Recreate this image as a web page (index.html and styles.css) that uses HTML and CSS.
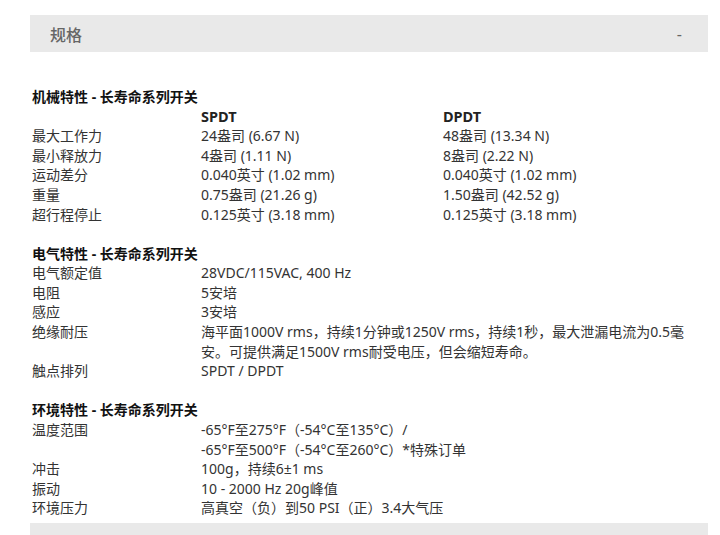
FILE: index.html
```html
<!DOCTYPE html>
<html lang="zh-CN">
<head>
<meta charset="utf-8">
<title>规格</title>
<link rel="stylesheet" href="styles.css">
</head>
<body>
<div class="page">
  <div class="acc-header">
    <span class="acc-title">规格</span>
    <span class="acc-toggle">-</span>
  </div>
  <div class="acc-body">
    <section class="spec">
      <h3 class="spec-title">机械特性 - 长寿命系列开关</h3>
      <div class="spec-grid three">
        <div></div><div class="col-head">SPDT</div><div class="col-head">DPDT</div>
        <div>最大工作力</div><div>24盎司 (6.67 N)</div><div>48盎司 (13.34 N)</div>
        <div>最小释放力</div><div>4盎司 (1.11 N)</div><div>8盎司 (2.22 N)</div>
        <div>运动差分</div><div>0.040英寸 (1.02 mm)</div><div>0.040英寸 (1.02 mm)</div>
        <div>重量</div><div>0.75盎司 (21.26 g)</div><div>1.50盎司 (42.52 g)</div>
        <div>超行程停止</div><div>0.125英寸 (3.18 mm)</div><div>0.125英寸 (3.18 mm)</div>
      </div>
    </section>
    <section class="spec">
      <h3 class="spec-title">电气特性 - 长寿命系列开关</h3>
      <div class="spec-grid two">
        <div>电气额定值</div><div>28VDC/115VAC, 400 Hz</div>
        <div>电阻</div><div>5安培</div>
        <div>感应</div><div>3安培</div>
        <div>绝缘耐压</div><div>海平面1000V rms，持续1分钟或1250V rms，持续1秒，最大泄漏电流为0.5毫<br>安。可提供满足1500V rms耐受电压，但会缩短寿命。</div>
        <div>触点排列</div><div>SPDT / DPDT</div>
      </div>
    </section>
    <section class="spec">
      <h3 class="spec-title">环境特性 - 长寿命系列开关</h3>
      <div class="spec-grid two">
        <div>温度范围</div><div>-65°F至275°F（-54°C至135°C）/<br>-65°F至500°F（-54°C至260°C）*特殊订单</div>
        <div>冲击</div><div>100g，持续6±1 ms</div>
        <div>振动</div><div>10 - 2000 Hz 20g峰值</div>
        <div>环境压力</div><div>高真空（负）到50 PSI（正）3.4大气压</div>
      </div>
    </section>
  </div>
  <div class="acc-header next"></div>
</div>
</body>
</html>
```

FILE: styles.css
```css
html, body {
  margin: 0;
  padding: 0;
  background: #fff;
}
body {
  font-family: "Noto Sans", "Noto Sans CJK SC", sans-serif;
  color: #333;
  font-size: 14px;
  overflow: hidden;
}
.page {
  padding: 15px 12px 0 30px;
}
.acc-header {
  background: #e9e9e9;
  height: 37px;
  padding: 0 26px 0 20px;
  display: flex;
  align-items: center;
  justify-content: space-between;
}
.acc-title {
  font-size: 16px;
  color: #666;
  font-weight: 500;
  font-family: "Noto Sans CJK SC", sans-serif;
}
.acc-toggle {
  font-size: 16px;
  color: #666;
}
.acc-body {
  padding: 35px 0 0 2px;
}
.spec + .spec {
  margin-top: 19.5px;
}
.spec-title {
  margin: 0;
  font-size: 14px;
  font-weight: 700;
  color: #111;
  line-height: 19.6px;
}
.spec-grid {
  display: grid;
  line-height: 19.6px;
}
.spec-grid.three {
  grid-template-columns: 169px 242px 1fr;
}
.spec-grid.two {
  grid-template-columns: 169px 1fr;
}
.col-head {
  font-weight: 700;
  font-size: 14.5px;
  color: #222;
}
.acc-header.next {
  margin-top: 5px;
}
```
